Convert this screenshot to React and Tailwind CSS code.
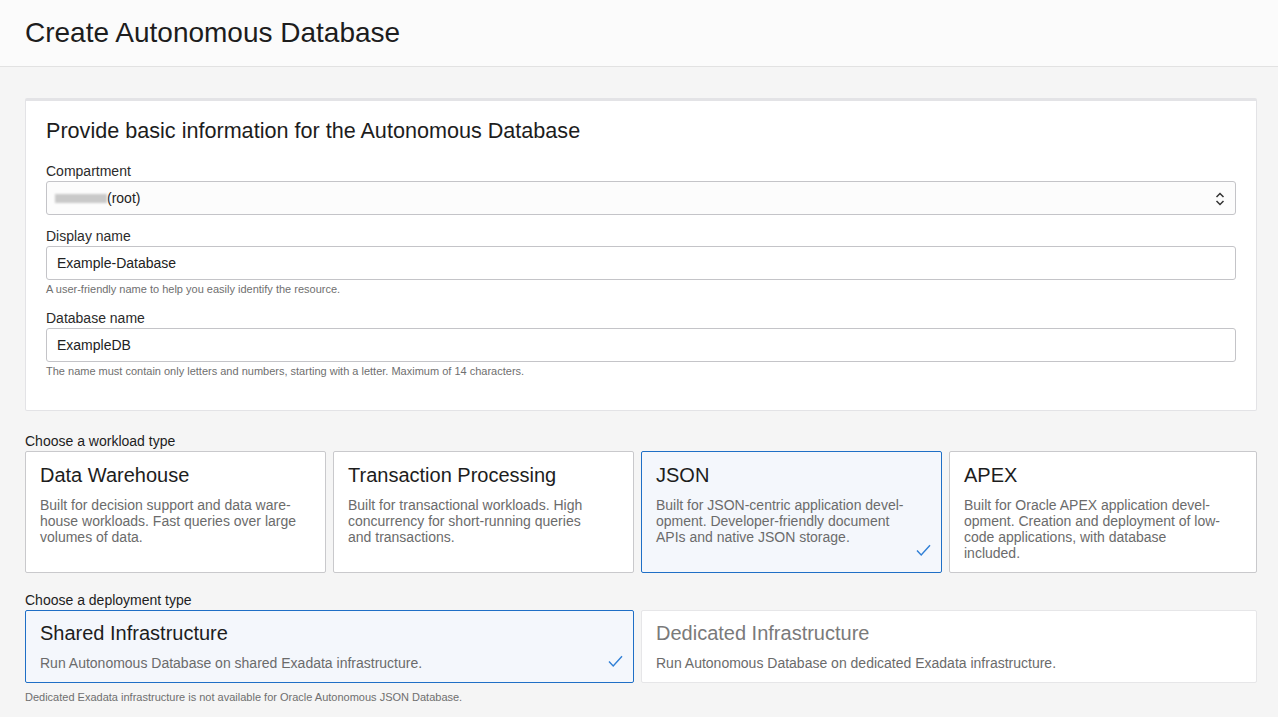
const font = { fontFamily: '"Liberation Sans", Arial, sans-serif' };

function Check({ pos }) {
  return (
    <svg width="15" height="13" viewBox="0 0 15 13" className={`absolute ${pos}`} fill="none">
      <path d="M1 6.5 L5.2 11 L14 1.2" stroke="#2f7fd6" strokeWidth="1.4" />
    </svg>
  );
}

function WorkloadCard({ title, lines, selected }) {
  return (
    <div
      className={`relative h-[122px] rounded-[2px] border px-[14px] pt-[10px] ${
        selected ? "border-[#1f6fc6] bg-[#f4f7fc]" : "border-[#c9c9cc] bg-white"
      }`}
    >
      <div className="text-[20px] leading-[26px] text-[#1d1d1d]">{title}</div>
      <div className="mt-[9px] text-[14px] leading-[16px] text-[#6b6b6b]">
        {lines.map((l) => (
          <div key={l}>{l}</div>
        ))}
      </div>
      {selected && <Check pos="bottom-[15px] right-[10px]" />}
    </div>
  );
}

function Field({ label, value, help, mt }) {
  return (
    <div className={mt}>
      <div className="h-[20px] text-[14px] leading-[20px] text-[#2b2b2b]">{label}</div>
      <div className="flex h-[34px] items-center rounded-[3px] border border-[#c4c4c8] bg-white px-[10px] pt-[1px] text-[14px] text-[#222]">
        {value}
      </div>
      <div className="mt-[2px] h-[14px] text-[11px] leading-[14px] text-[#6f6f6f]">{help}</div>
    </div>
  );
}

export default function App() {
  return (
    <div className="min-h-[717px] bg-[#f5f5f5]" style={font}>
      <div className="h-[67px] border-b border-[#e2e2e2] bg-[#fbfbfb] px-[25px] pt-[15px]">
        <h1 className="text-[28px] leading-[36px] text-[#1d1d1d]">Create Autonomous Database</h1>
      </div>

      <div className="pl-[25px] pr-[21px]">
        <div className="mt-[31px] rounded-[2px] border border-t-[3px] border-[#e3e3e6] bg-white px-[20px] pt-[16px] pb-[32px]">
          <h2 className="text-[21.6px] leading-[28px] text-[#1d1d1d]">
            Provide basic information for the Autonomous Database
          </h2>

          <div className="mt-[16px]">
            <div className="h-[20px] text-[14px] leading-[20px] text-[#2b2b2b]">Compartment</div>
            <div className="flex h-[34px] items-center justify-between rounded-[3px] border border-[#c4c4c8] bg-[#fcfcfc] pl-[8px] pr-[10px] pt-[1px] text-[14px] text-[#222]">
              <div className="flex items-center">
                <span className="h-[9px] w-[52px] bg-[#c9c9c9] blur-[1px]" />
                <span>(root)</span>
              </div>
              <svg width="10" height="16" viewBox="0 0 10 16" fill="none">
                <path d="M1.5 6 L5 2.5 L8.5 6" stroke="#333" strokeWidth="1.5" />
                <path d="M1.5 10 L5 13.5 L8.5 10" stroke="#333" strokeWidth="1.5" />
              </svg>
            </div>
          </div>

          <Field
            mt="mt-[11px]"
            label="Display name"
            value="Example-Database"
            help="A user-friendly name to help you easily identify the resource."
          />
          <Field
            mt="mt-[12px]"
            label="Database name"
            value="ExampleDB"
            help="The name must contain only letters and numbers, starting with a letter. Maximum of 14 characters."
          />
        </div>

        <div className="mt-[20px] h-[20px] text-[14px] leading-[20px] text-[#1d1d1d]">Choose a workload type</div>
        <div className="grid grid-cols-[301px_301px_301px_1fr] gap-[7px]">
          <WorkloadCard
            title="Data Warehouse"
            lines={["Built for decision support and data ware-", "house workloads. Fast queries over large", "volumes of data."]}
          />
          <WorkloadCard
            title="Transaction Processing"
            lines={["Built for transactional workloads. High", "concurrency for short-running queries", "and transactions."]}
          />
          <WorkloadCard
            selected
            title="JSON"
            lines={["Built for JSON-centric application devel-", "opment. Developer-friendly document", "APIs and native JSON storage."]}
          />
          <WorkloadCard
            title="APEX"
            lines={["Built for Oracle APEX application devel-", "opment. Creation and deployment of low-", "code applications, with database", "included."]}
          />
        </div>

        <div className="mt-[17px] h-[20px] text-[14px] leading-[20px] text-[#1d1d1d]">Choose a deployment type</div>
        <div className="grid grid-cols-[609px_1fr] gap-[7px]">
          <div className="relative h-[73px] rounded-[2px] border border-[#1f6fc6] bg-[#f4f7fc] px-[14px] pt-[9px]">
            <div className="text-[20px] leading-[26px] text-[#1d1d1d]">Shared Infrastructure</div>
            <div className="mt-[9px] text-[14px] leading-[16px] text-[#6b6b6b]">
              Run Autonomous Database on shared Exadata infrastructure.
            </div>
            <Check pos="bottom-[14px] right-[10px]" />
          </div>
          <div className="h-[73px] rounded-[2px] border border-[#e6e6e8] bg-white px-[14px] pt-[9px]">
            <div className="text-[20px] leading-[26px] text-[#7a7a7a]">Dedicated Infrastructure</div>
            <div className="mt-[9px] text-[14px] leading-[16px] text-[#6b6b6b]">
              Run Autonomous Database on dedicated Exadata infrastructure.
            </div>
          </div>
        </div>
        <div className="mt-[7px] text-[11px] leading-[14px] text-[#6f6f6f]">
          Dedicated Exadata infrastructure is not available for Oracle Autonomous JSON Database.
        </div>
      </div>
    </div>
  );
}
